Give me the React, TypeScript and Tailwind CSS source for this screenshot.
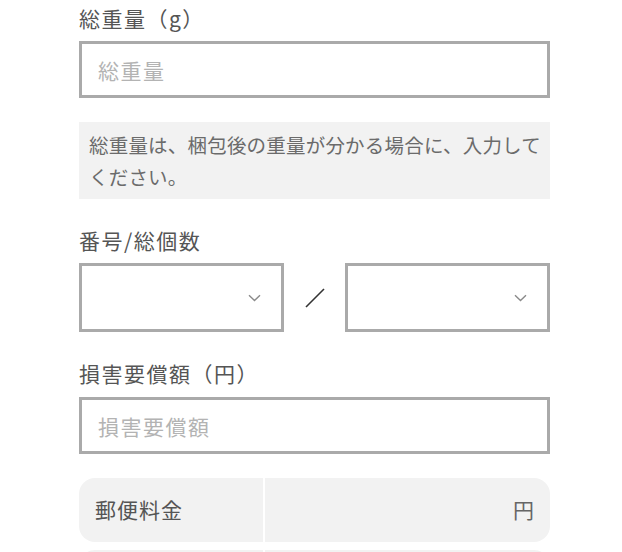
import React from 'react';

const font = { fontFamily: '"Noto Sans CJK JP", "Noto Sans", sans-serif' };

const Chevron = () => (
  <svg width="13" height="8" viewBox="0 0 13 8" fill="none" className="shrink-0">
    <path d="M1 1.2 L6.5 6.5 L12 1.2" stroke="#8a8a8a" strokeWidth="1.4" />
  </svg>
);

const SelectBox = () => (
  <div className="flex h-[69px] w-[205px] items-center justify-end border-[3px] border-[#aaaaaa] bg-white pr-[20px]">
    <Chevron />
  </div>
);

const TextInput: React.FC<{ placeholder: string }> = ({ placeholder }) => (
  <input
    placeholder={placeholder}
    className="block h-[57px] w-full border-[3px] border-[#aaaaaa] bg-white px-[16px] text-[21px] tracking-[1.5px] text-[#444] outline-none placeholder:text-[#b3b3b3]"
    style={font}
  />
);

export default function App() {
  return (
    <div className="h-[552px] w-[622px] overflow-hidden bg-white" style={font}>
      <div className="ml-[79px] w-[471px]">
        <p className="mt-[3px] mb-[8px] text-[21px] leading-[30px] tracking-[1.5px] text-[#555]">総重量（g）</p>
        <TextInput placeholder="総重量" />

        <div className="mt-[24px] bg-[#f2f2f2] pl-[10px] pr-[4px] pt-[7px] pb-[6px] text-[19.5px] leading-[32px] tracking-[0.2px] text-[#6b6b6b]">
          総重量は、梱包後の重量が分かる場合に、入力してください。
        </div>

        <p className="mt-[26px] mb-[8px] text-[21px] leading-[30px] tracking-[1.5px] text-[#555]">番号/総個数</p>
        <div className="flex items-center justify-between">
          <SelectBox />
          <svg width="22" height="22" viewBox="0 0 22 22" className="shrink-0">
            <path d="M2 20 L20 2" stroke="#333" strokeWidth="1.6" />
          </svg>
          <SelectBox />
        </div>

        <p className="mt-[26px] mb-[9px] text-[21px] leading-[30px] tracking-[1.5px] text-[#555]">損害要償額（円）</p>
        <TextInput placeholder="損害要償額" />

        <div className="mt-[24px] flex h-[64px] overflow-hidden rounded-[16px] bg-[#f2f2f2]">
          <div className="flex w-[186px] items-center border-r-2 border-white pl-[16px] text-[21px] tracking-[1px] text-[#555]">
            郵便料金
          </div>
          <div className="flex flex-1 items-center justify-end pr-[16px] text-[21px] text-[#666]">円</div>
        </div>
        <div className="mt-[8px] flex h-[64px] overflow-hidden rounded-[16px] bg-[#f2f2f2]">
          <div className="w-[186px] border-r-2 border-white" />
          <div className="flex-1" />
        </div>
      </div>
    </div>
  );
}
